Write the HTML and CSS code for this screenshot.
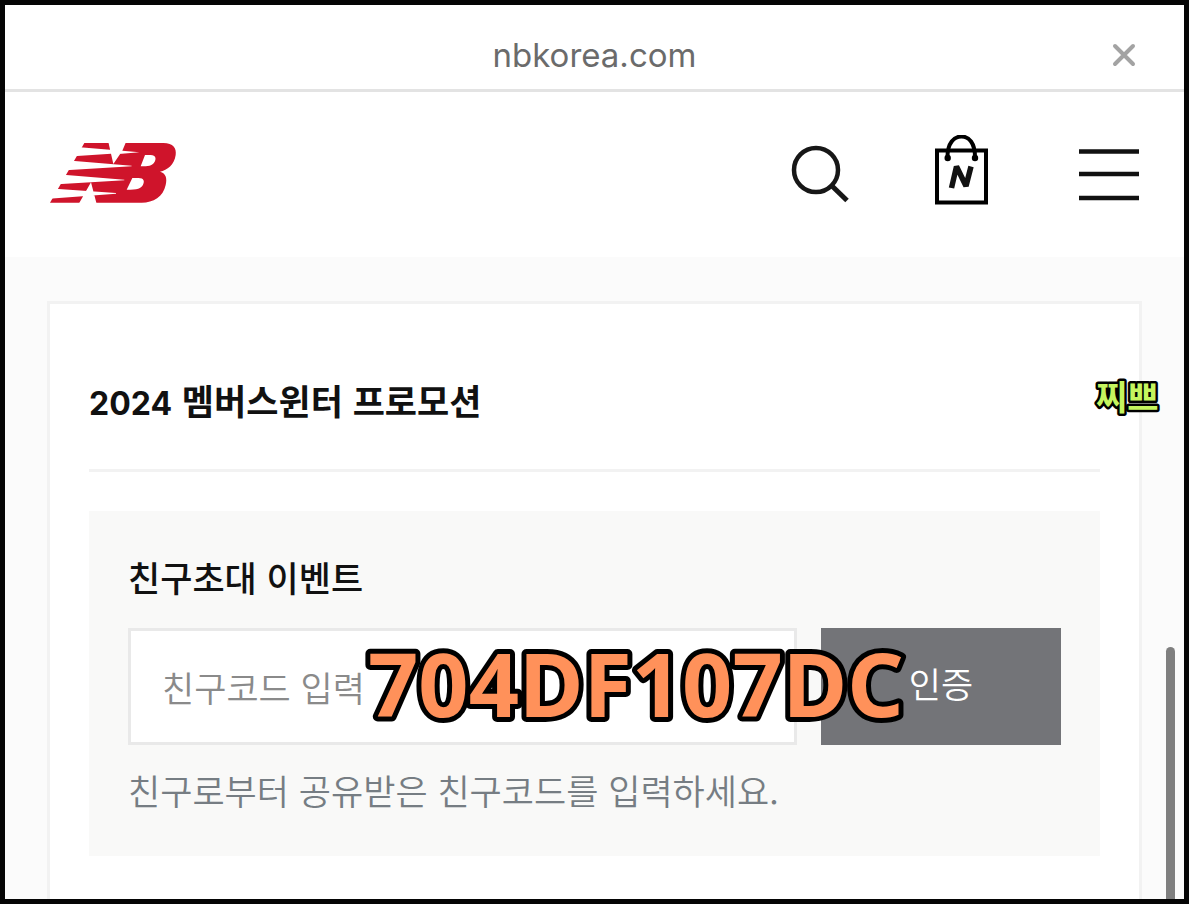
FILE: index.html
```html
<!DOCTYPE html>
<html lang="ko">
<head>
<meta charset="utf-8">
<meta name="viewport" content="width=device-width, initial-scale=1">
<title>nbkorea.com</title>
<link rel="stylesheet" href="styles.css">
</head>
<body>
<div class="frame">
  <div class="address-bar">
    <span class="address">nbkorea.com</span>
    <button class="close" type="button" aria-label="닫기">
      <svg width="24" height="24" viewBox="0 0 24 24"><path d="M3 3 21 21M21 3 3 21" fill="none" stroke="#a3a3a3" stroke-width="4" stroke-linecap="round"/></svg>
    </button>
  </div>
  <header class="site-header">
    <a class="logo" href="#" aria-label="New Balance">
      <svg width="130" height="62" viewBox="54 66 390 186">
        <path fill="#cf142b" d="M163 69H400C430 69 440 85 437 105C433 135 412 150 390 155C408 160 412 175 407 195C400 230 370 248 335 248H60Z"/>
        <path fill="#fff" d="M235 66H288L277 92L250 132L243 101ZM183 187 200 252H146ZM150 82 240 89 277 92 328 97 267 102 243 101 130 109ZM125 122 305 137V139L107 151ZM100 164 283 179V181L82 193ZM75 206 258 219V221L57 236ZM345 105H362C378 105 380 118 372 128C366 137 355 139 332 139ZM307 174H325C343 174 344 185 339 194C334 205 322 209 290 209Z"/>
      </svg>
    </a>
    <nav class="tools">
      <button class="tool" type="button" aria-label="검색">
        <svg width="60" height="76" viewBox="0 1 60 76"><circle cx="27" cy="36" r="22" fill="none" stroke="#171717" stroke-width="4.500"/><path d="M42 51 58 66.500" stroke="#171717" stroke-width="5"/></svg>
      </button>
      <button class="tool" type="button" aria-label="장바구니">
        <svg width="58" height="76" viewBox="0 3 58 76"><path d="M2 18.500H51V70.500H2Z" fill="none" stroke="#000" stroke-width="4"/><path d="M12.500 25C12.500 11 19 4.500 26.500 4.500S40 11 40 25" fill="none" stroke="#000" stroke-width="4"/><circle cx="12.700" cy="26" r="3.200"/><circle cx="40" cy="26" r="3.200"/><path d="M16.500 56 21.500 34.500 31 54 36 34.500" fill="none" stroke="#111" stroke-width="5.500" stroke-linejoin="bevel"/></svg>
      </button>
      <button class="tool" type="button" aria-label="메뉴">
        <svg width="60" height="76" viewBox="0 2 60 76"><path d="M0 18.500H60M0 41H60M0 65H60" stroke="#111" stroke-width="4.500"/></svg>
      </button>
    </nav>
  </header>
  <main class="content">
    <section class="card">
      <h1 class="title"><span class="year">2024</span> 멤버스윈터 프로모션</h1>
      <form class="panel">
        <label class="panel-title" for="code">친구초대 이벤트</label>
        <div class="row">
          <input class="code-input" id="code" type="text" placeholder="친구코드 입력" aria-describedby="hint">
          <button class="verify" type="button">인증</button>
          <svg class="code-overlay" width="560" height="117"><text x="10" y="89">704DF107DC</text></svg>
        </div>
        <p class="hint" id="hint">친구로부터 공유받은 친구코드를 입력하세요.</p>
      </form>
    </section>
  </main>
  <svg class="signature" width="72" height="56"><text x="4" y="40">찌쁘</text></svg>
  <div class="scroll-thumb"></div>
</div>
</body>
</html>
```

FILE: styles.css
```css
* {
  box-sizing: border-box;
}

body {
  margin: 0;
  font-family: "Noto Sans CJK KR", sans-serif;
  color: #111;
}

button {
  border: 0;
  padding: 0;
  background: none;
  font-family: inherit;
}

.frame {
  position: relative;
  display: flex;
  flex-direction: column;
  height: 100vh;
  overflow: hidden;
  border: 5px solid #050505;
  background: #fff;
}

.address-bar {
  display: grid;
  grid-template-columns: 1fr auto 1fr;
  align-items: center;
  flex: none;
  height: 87px;
  padding: 16px 48px 0;
  border-bottom: 3px solid #e3e3e3;
}

.address {
  grid-column: 2;
  font-family: Inter, sans-serif;
  font-size: 33px;
  color: #6b6b6b;
}

.close {
  justify-self: end;
  height: 24px;
}

.close svg,
.logo svg,
.tool svg {
  display: block;
}

.site-header {
  display: flex;
  align-items: center;
  justify-content: space-between;
  flex: none;
  height: 165px;
  padding: 0 45px 4px 43px;
}

.tools {
  display: flex;
  gap: 86px;
}

.content {
  flex: 1 0 auto;
  display: flex;
  padding: 44px 42px 0;
  background: #fbfbfb;
}

.card {
  flex: 1;
  padding: 0 39px 80px;
  border: 3px solid #f2f2f2;
  background: #fff;
}

.title {
  margin: 0 0 39px;
  padding: 71px 0 44px;
  border-bottom: 3px solid #f2f2f2;
  font-size: 35px;
  line-height: 50px;
  font-weight: 700;
}

.year {
  font-family: Inter, sans-serif;
  font-size: 32px;
  line-height: 1;
}

.panel {
  padding: 40px 39px;
  background: #f9f9f8;
}

.panel-title {
  display: block;
  margin-bottom: 25px;
  font-size: 35px;
  line-height: 52px;
  font-weight: 500;
}

.row {
  position: relative;
  display: flex;
  gap: 24px;
}

.code-input {
  flex: 1;
  min-width: 0;
  height: 117px;
  padding: 0 31px;
  border: 3px solid #e9e9e9;
  border-radius: 0;
  background: #fff;
  font-family: inherit;
  font-size: 35px;
  font-weight: 350;
}

.code-input::placeholder {
  color: #8a8a8a;
}

.verify {
  width: 240px;
  padding-bottom: 8px;
  background: #737478;
  color: #fff;
  font-size: 35px;
  font-weight: 350;
}

.code-overlay {
  position: absolute;
  left: 230px;
  top: 0;
  overflow: visible;
  fill: #ff915a;
  stroke: #000;
  stroke-width: 10px;
  stroke-linejoin: round;
  paint-order: stroke;
  font-family: "Noto Sans", sans-serif;
  font-size: 88px;
  font-weight: 700;
  pointer-events: none;
}

.hint {
  margin: 19px 0 0;
  font-size: 35px;
  line-height: 52px;
  font-weight: 350;
  color: #767d83;
}

.signature {
  position: absolute;
  right: 20px;
  top: 365px;
  overflow: visible;
  fill: #c5f55f;
  stroke: #000;
  stroke-width: 5px;
  stroke-linejoin: round;
  paint-order: stroke;
  font-size: 34px;
  font-weight: 700;
}

.scroll-thumb {
  position: absolute;
  right: 9px;
  top: 642px;
  bottom: 0;
  width: 9px;
  border-radius: 5px 5px 0 0;
  background: #7f7f7f;
}
```
